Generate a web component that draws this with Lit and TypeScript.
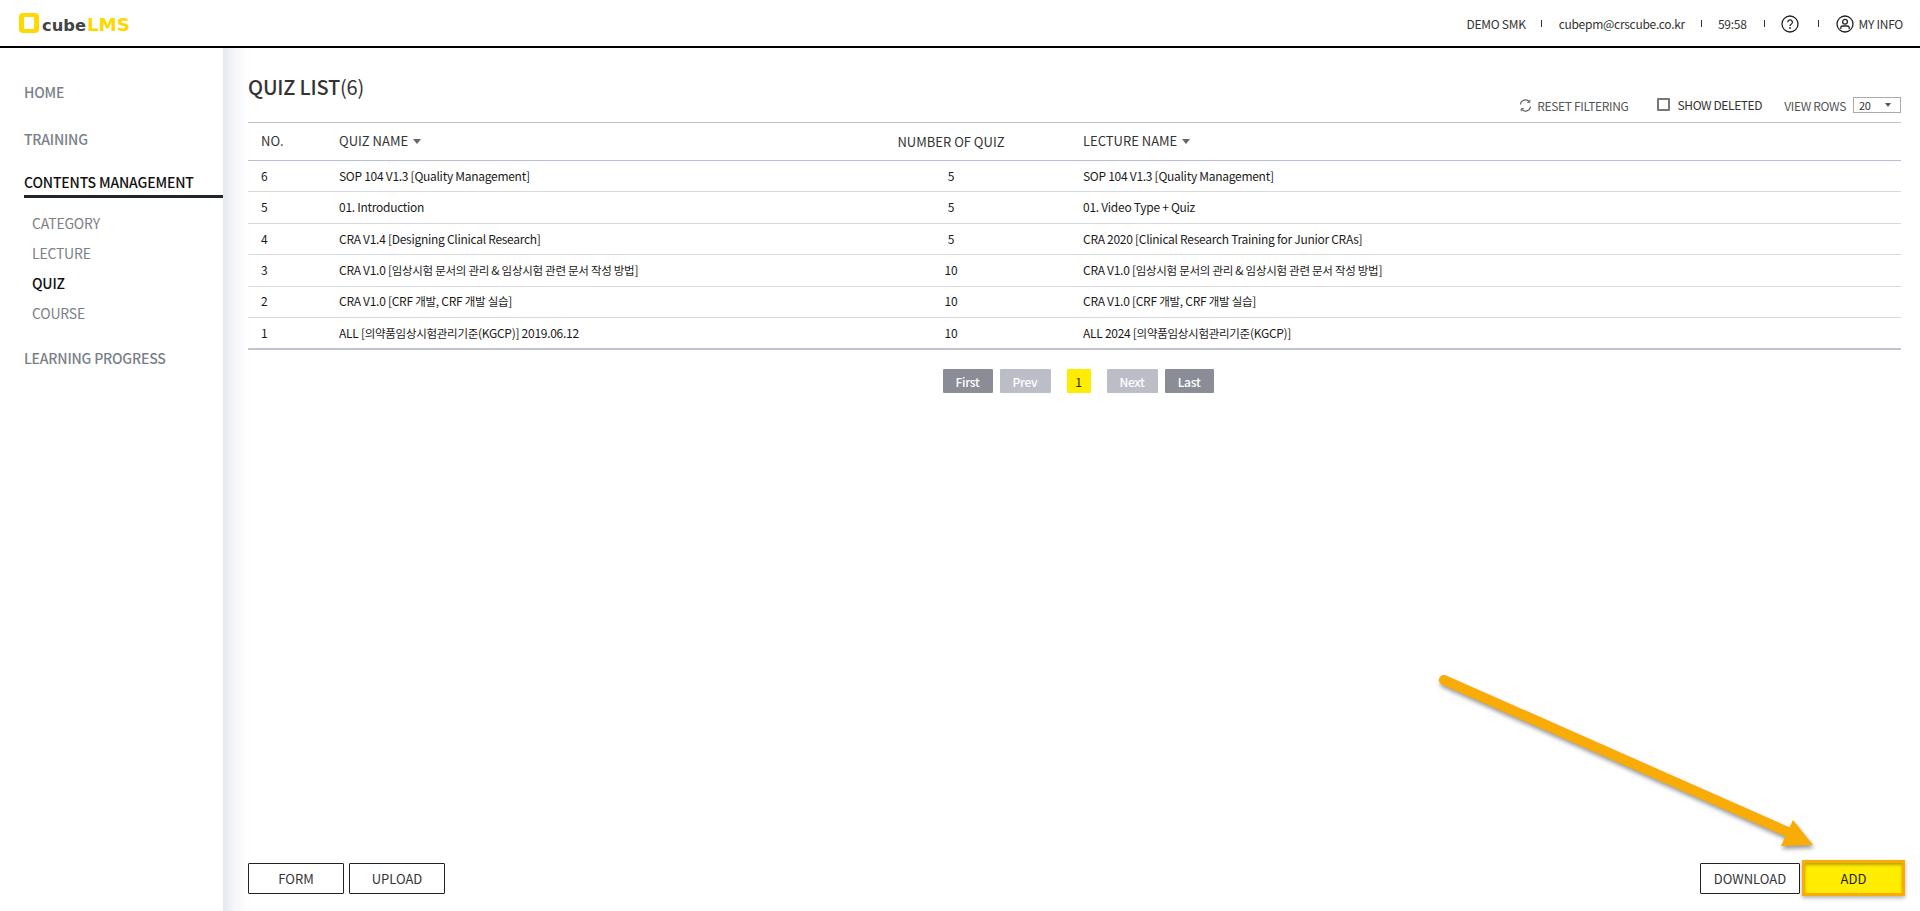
import { LitElement, html, css } from "lit";
import { customElement } from "lit/decorators.js";

const rows = [
  ["6", "SOP 104 V1.3 [Quality Management]", "5", "SOP 104 V1.3 [Quality Management]"],
  ["5", "01. Introduction", "5", "01. Video Type + Quiz"],
  ["4", "CRA V1.4 [Designing Clinical Research]", "5", "CRA 2020 [Clinical Research Training for Junior CRAs]"],
  ["3", "CRA V1.0 [임상시험 문서의 관리 & 임상시험 관련 문서 작성 방법]", "10", "CRA V1.0 [임상시험 문서의 관리 & 임상시험 관련 문서 작성 방법]"],
  ["2", "CRA V1.0 [CRF 개발, CRF 개발 실습]", "10", "CRA V1.0 [CRF 개발, CRF 개발 실습]"],
  ["1", "ALL [의약품임상시험관리기준(KGCP)] 2019.06.12", "10", "ALL 2024 [의약품임상시험관리기준(KGCP)]"],
];

const ko = (s: string) =>
  s.split(/([\uac00-\ud7a3][\uac00-\ud7a3 ]*)/).map((p, i) => (i % 2 ? html`<span class="ko">${p}</span>` : p));

@customElement("app-root")
export class AppRoot extends LitElement {
  static styles = css`
    :host { display: block; position: relative; width: 1920px; height: 911px; overflow: hidden; background: #fff;
      font-family: "Noto Sans CJK KR", "Noto Sans", sans-serif; font-size: 12px; color: #222; letter-spacing: -0.28px; }
    .page { display: flex; flex-direction: column; height: 911px; }
    header { flex: none; height: 46px; border-bottom: 2px solid #000; display: flex; align-items: center; justify-content: space-between; padding: 0 17px 0 19px; }
    .logo { display: flex; align-items: flex-end; gap: 3px; }
    .logo-box { width: 10px; height: 12px; border-style: solid; border-width: 4px 5.5px; border-color: #ffd800; border-radius: 4px; }
    .logo-text { font-family: "DejaVu Sans", sans-serif; font-weight: 700; font-size: 16.3px; line-height: 15px; letter-spacing: 0; color: #444; }
    .logo-text b { color: #ffd800; font-size: 18.3px; letter-spacing: 0; margin-left: 1px; }
    .top { display: flex; align-items: center; color: #333; }
    .sep { width: 1px; height: 7px; background: #333; }
    .ic { display: block; margin-top: 2px; }
    .myinfo { display: flex; align-items: center; gap: 5px; }
    .body { flex: 1; display: flex; min-height: 0; }
    aside { flex: none; width: 223px; padding: 32px 0 0 24px; box-sizing: border-box; }
    .n1 { font-size: 14px; font-weight: 500; color: #7a7f88; line-height: 24px; letter-spacing: -0.2px; }
    .n1.home { margin-bottom: 23px; }
    .n1.training { margin-bottom: 19px; }
    .n1.on { color: #111; height: 25px; border-bottom: 3px solid #20242e; letter-spacing: -0.15px; }
    .sub { padding: 10px 0 0 8px; }
    .n2 { font-size: 14px; color: #7a7f88; line-height: 30px; letter-spacing: -0.2px; }
    .n2.on { color: #111; font-weight: 500; }
    .n1.lp { margin-top: 18px; }
    main { flex: 1; min-width: 0; display: flex; flex-direction: column; padding: 0 19px 15px 25px;
      background: linear-gradient(to right, #e3e7ef 0, #f6f7fa 12px, #fff 28px) no-repeat left top / 40px 100%; }
    .head-area { height: 74px; display: flex; justify-content: space-between; position: relative; }
    h1 { margin: 26px 0 0; font-size: 20px; font-weight: 500; line-height: 26px; color: #333; letter-spacing: -0.2px; }
    h1 span { font-weight: 400; }
    .tools { display: flex; align-items: flex-start; color: #555; padding-top: 48px; letter-spacing: -0.32px; }
    .tools .ic { margin-top: 0; }
    .reset { display: flex; align-items: center; gap: 5px; height: 18px; margin-right: 28px; }
    .chk { display: flex; align-items: center; gap: 8px; height: 16px; margin-right: 22px; color: #333; letter-spacing: -0.4px; }
    .box { width: 9px; height: 9px; border: 2px solid #777; border-radius: 1px; }
    .rowsel { display: flex; align-items: center; gap: 7px; height: 16px; margin-top: 1px; }
    .sel { width: 48px; height: 16px; box-sizing: border-box; border: 1px solid #aaa; display: flex; align-items: center; justify-content: space-between; padding: 0 9px 0 5px; color: #333; font-size: 11px; }
    .tri { width: 0; height: 0; border-left: 3.5px solid transparent; border-right: 3.5px solid transparent; border-top: 4px solid #555; }
    table { width: 100%; border-collapse: collapse; table-layout: fixed; border-top: 1px solid #b9bed0; border-bottom: 2px solid #c0c4d0; }
    th { height: 38px; font-weight: 400; font-size: 13px; letter-spacing: 0; text-align: left; color: #333; padding: 0 0 2px 13px; border-bottom: 1px solid #b9bed0; box-sizing: border-box; }
    td { height: 31.45px; box-sizing: border-box; padding: 0 0 2px 13px; color: #1a1a1a; border-bottom: 1px solid #d6d9e0; }
    tr:last-child td { border-bottom: 0; }
    th:last-child, td:last-child { padding-left: 12px; }
    .ko { font-size: 11.5px; }
    .c { text-align: center; padding: 0 0 2px; }
    th.c { padding-top: 1px; }
    .sort { display: inline-block; vertical-align: 2px; margin-left: 5px; width: 0; height: 0; border-left: 4px solid transparent; border-right: 4px solid transparent; border-top: 5px solid #666; }
    .pager { display: flex; justify-content: center; margin: 19px 0 0; height: 24px; padding-left: 7px; }
    .pg { height: 24px; box-sizing: border-box; width: 50px; display: flex; align-items: center; justify-content: center; color: #fff; font-weight: 500; background: #8a8d96; border-radius: 1px; }
    .pg.l { background: #bbbec7; width: 51px; }
    .pg.cur { background: #ffed00; color: #222; width: 24px; font-weight: 400; margin: 0 16px; }
    .pg.last { width: 49px; }
    .mr7 { margin-right: 7px; }
    .foot { margin-top: auto; display: flex; justify-content: space-between; align-items: center; }
    .btns { display: flex; gap: 5px; align-items: center; }
    .btn { height: 31px; width: 96px; box-sizing: border-box; border: 1px solid #222; border-radius: 1px; display: flex; align-items: center; justify-content: center; font-size: 13px; color: #333; background: #fff; letter-spacing: 0; }
    .btn.dl { width: 100px; }
    .add { width: 103px; height: 36px; margin: 0 -4px 0 -3px; box-sizing: border-box; border: 3px solid #f9ab06; display: flex; align-items: center; justify-content: center; font-size: 13px; color: #222; background: #ffed00; box-shadow: inset 0 2px 3px rgba(120,110,0,.55), 0 2px 4px rgba(0,0,0,.3); letter-spacing: 0; }
    .arrow { position: absolute; left: 0; top: 0; width: 1920px; height: 911px; pointer-events: none; filter: drop-shadow(1px 3px 2px rgba(0,0,0,.4)); }
  `;

  render() {
    return html`
      <div class="page">
        <header>
          <div class="logo"><div class="logo-box"></div><div class="logo-text">cube<b>LMS</b></div></div>
          <div class="top">
            <span>DEMO SMK</span><i class="sep" style="margin:0 17px 0 15px"></i>
            <span>cubepm@crscube.co.kr</span><i class="sep" style="margin:0 16px"></i>
            <span>59:58</span><i class="sep" style="margin:0 16px 0 17px"></i>
            <svg class="ic" width="18" height="18" viewBox="0 0 18 18" fill="none" stroke="#222"><circle cx="9" cy="9" r="8" stroke-width="1.3"/><path d="M6.8 7.2a2.3 2.3 0 1 1 3.4 2c-.8.5-1.2.9-1.2 1.8" stroke-width="1.3"/><circle cx="9" cy="13" r=".9" fill="#222" stroke="none"/></svg>
            <i class="sep" style="margin:0 17px 0 19px"></i>
            <div class="myinfo">
              <svg class="ic" width="18" height="18" viewBox="0 0 18 18" fill="none" stroke="#222" stroke-width="1.3"><circle cx="9" cy="9" r="8"/><circle cx="9" cy="6.8" r="2.4"/><path d="M4.8 14v-1.4c0-1 .8-1.6 1.8-1.6h4.8c1 0 1.8.6 1.8 1.6V14"/></svg>
              <span>MY INFO</span>
            </div>
          </div>
        </header>
        <div class="body">
          <aside>
            <div class="n1 home">HOME</div>
            <div class="n1 training">TRAINING</div>
            <div class="n1 on">CONTENTS MANAGEMENT</div>
            <div class="sub">
              <div class="n2">CATEGORY</div>
              <div class="n2">LECTURE</div>
              <div class="n2 on">QUIZ</div>
              <div class="n2">COURSE</div>
            </div>
            <div class="n1 lp">LEARNING PROGRESS</div>
          </aside>
          <main>
            <div class="head-area">
              <h1>QUIZ LIST<span>(6)</span></h1>
              <div class="tools">
                <div class="reset">
                  <svg class="ic" width="13" height="13" viewBox="0 0 13 13" fill="none" stroke="#666" stroke-width="1.2"><path d="M1.5 5.5A5 5 0 0 1 10.5 3"/><path d="M11.5 7.5A5 5 0 0 1 2.5 10"/><path d="M10.8 .8v2.6H8.2M2.2 12.2V9.6h2.6" stroke-width="1"/></svg>
                  <span>RESET FILTERING</span>
                </div>
                <div class="chk"><div class="box"></div><span>SHOW DELETED</span></div>
                <div class="rowsel"><span>VIEW ROWS</span><div class="sel"><span>20</span><i class="tri"></i></div></div>
              </div>
            </div>
            <table>
              <colgroup><col style="width:78px"/><col style="width:505px"/><col style="width:240px"/><col/></colgroup>
              <thead><tr>
                <th>NO.</th><th>QUIZ NAME<i class="sort"></i></th><th class="c">NUMBER OF QUIZ</th><th>LECTURE NAME<i class="sort"></i></th>
              </tr></thead>
              <tbody>
                ${rows.map((r) => html`<tr><td>${r[0]}</td><td>${ko(r[1])}</td><td class="c">${r[2]}</td><td>${ko(r[3])}</td></tr>`)}
              </tbody>
            </table>
            <div class="pager">
              <div class="pg mr7">First</div><div class="pg l">Prev</div><div class="pg cur">1</div><div class="pg l mr7">Next</div><div class="pg last">Last</div>
            </div>
            <div class="foot">
              <div class="btns"><div class="btn">FORM</div><div class="btn">UPLOAD</div></div>
              <div class="btns"><div class="btn dl">DOWNLOAD</div><div class="add">ADD</div></div>
            </div>
          </main>
        </div>
      </div>
      <svg class="arrow" viewBox="0 0 1920 911">
        <path d="M1444 680L1790 833" stroke="#f9ab06" stroke-width="10" stroke-linecap="round" fill="none"/>
        <path d="M1793 820L1813 845L1781 846Z" fill="#f9ab06"/>
      </svg>
    `;
  }
}
